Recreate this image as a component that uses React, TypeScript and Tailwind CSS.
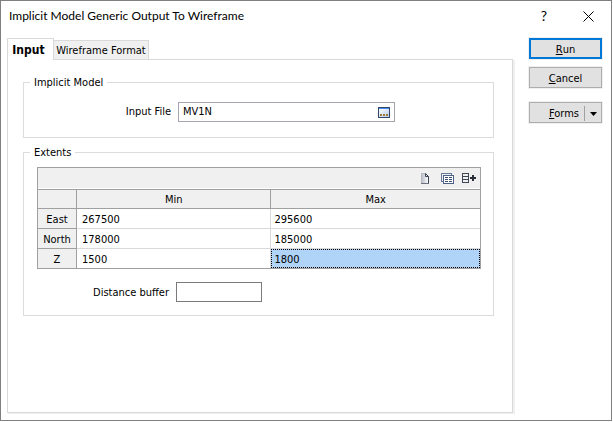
import React from 'react';

const rows = [
    { name: "East", min: "267500", max: "295600" },
    { name: "North", min: "178000", max: "185000" },
    { name: "Z", min: "1500", max: "1800" },
];

const buttonStyle = "h-[21px] w-full pt-0.5 bg-[#e1e1e1] outline-1 outline-[#f0f0f0] flex items-center justify-center";

const BrowseIcon = () => (
    <svg width="12" height="11" viewBox="0 0 12 11" shapeRendering="crispEdges">
        <defs>
            <linearGradient id="browse" x1="0" y1="0" x2="1" y2="1">
                <stop offset="0" stopColor="#ffffff" />
                <stop offset="1" stopColor="#b9cdec" />
            </linearGradient>
        </defs>
        <rect width="12" height="11" fill="#33476b" />
        <rect x="1" y="1" width="10" height="9" fill="url(#browse)" />
        <rect x="1" y="1" width="10" height="1" fill="#4a8af0" />
        <path d="M2 7h2v2H2zM5 7h2v2H5zM8 7h2v2H8z" fill="#a27a35" />
    </svg>
);

const NewIcon = () => (
    <svg width="8" height="11" viewBox="0 0 8 11">
        <defs>
            <linearGradient id="page" x1="0" y1="0" x2="1" y2="0">
                <stop offset="0" stopColor="#b9bdc5" />
                <stop offset="1" stopColor="#ffffff" />
            </linearGradient>
        </defs>
        <path d="M.5.5h4l3 3v7h-7z" fill="url(#page)" />
        <path d="M.5 10.5V.5h4" fill="none" stroke="#b4b8bf" />
        <path d="M4.5.5v3h3M4.5.5l3 3v7" fill="none" stroke="#3b4252" />
        <path d="M0 10.500h8" fill="none" stroke="#6b7180" />
    </svg>
);

const TablesIcon = () => (
    <svg width="13" height="11" viewBox="0 0 13 11" shapeRendering="crispEdges">
        <path d="M0 0h11v2h-1V1H1v7h1v1H0z" fill="#65789b" />
        <rect x="2" y="2" width="11" height="9" fill="#4c6088" />
        <rect x="3" y="3" width="9" height="7" fill="#ffffff" />
        <path d="M4 4h3v1H4zM8 4h3v1H8zM4 6h3v1H4zM8 6h3v1H8zM4 8h3v1H4zM8 8h3v1H8z" fill="#3d4f70" />
    </svg>
);

const AddRowIcon = () => (
    <svg width="14" height="10" viewBox="0 0 14 10" shapeRendering="crispEdges">
        <path d="M0 0h7v10H0zM1 1v2h5V1zM1 4v2h5V4zM1 7v2h5V7z" fill="#3f4658" fillRule="evenodd" />
        <path d="M10 2h2v2h2v2h-2v2h-2V6H8V4h2z" fill="#2b2f3a" />
    </svg>
);

const TitleBar = () => {
    return (
        <header className="h-[30px] pl-2 pr-[17px] flex items-center justify-between font-['Lato','Open_Sans',sans-serif] text-[12px]">
            <h1>Implicit Model Generic Output To Wireframe</h1>
            <div className="flex items-center gap-9">
                <button type="button" aria-label="Help" className="text-[14px] leading-4">?</button>
                <button type="button" aria-label="Close">
                    <svg width="11" height="11" viewBox="0 0 11 11">
                        <path d="M.5.5l10 10M10.5.5l-10 10" stroke="#000000" fill="none" />
                    </svg>
                </button>
            </div>
        </header>
    );
}

const ExtentsTable = () => {
    return (
        <div className="border border-[#a0a0a0]">
            <div className="h-[21px] pr-1 border-b border-white bg-[#f0f0f0] flex items-center justify-end gap-3">
                <button type="button" aria-label="New"><NewIcon /></button>
                <button type="button" aria-label="Copy table"><TablesIcon /></button>
                <button type="button" aria-label="Add row" className="-ml-1"><AddRowIcon /></button>
            </div>
            <table className="w-full table-fixed border-separate border-spacing-0 border-t border-[#a0a0a0]">
                <thead>
                    <tr className="h-[19px] bg-[#f0f0f0]">
                        <td className="w-[39px] p-0 border-r border-b border-[#a0a0a0]"></td>
                        <th scope="col" className="w-[44%] p-0 pt-px font-normal border-r border-b border-[#a0a0a0]">Min</th>
                        <th scope="col" className="p-0 pt-px font-normal border-b border-[#a0a0a0]">Max</th>
                    </tr>
                </thead>
                <tbody>
                    {rows.map((row) => (
                        <tr key={row.name} className="group h-5 last:h-[19px]">
                            <th scope="row" className="p-0 pt-0.5 font-normal bg-[#f0f0f0] border-r border-b border-[#a0a0a0] group-last:border-b-0">{row.name}</th>
                            <td className="p-0 pt-0.5 pl-[5px] border-r border-b border-[#d9d9d9] group-last:border-b-0">{row.min}</td>
                            <td className="p-0 pt-0.5 pl-[3px] border-b border-[#d9d9d9] group-last:border group-last:leading-[15px] group-last:pl-0.5 group-last:border-dotted group-last:border-black group-last:bg-[#b0d3f8]">{row.max}</td>
                        </tr>
                    ))}
                </tbody>
            </table>
        </div>
    );
}

const InputPanel = () => {
    return (
        <div role="tabpanel" className="flex-1 border border-[#d9d9d9] shadow-[1px_1px_0_#f0f0f0,2px_1px_0_#f0f0f0] pt-4 pl-[15px] pr-[18px]">
            <fieldset className="min-w-0 border border-[#dcdcdc] px-[13px] pb-[15px]">
                <legend className="-ml-[7px] px-1 leading-[13px]">Implicit Model</legend>
                <div className="pt-[13px] flex items-center gap-[7px]">
                    <label htmlFor="input-file" className="w-[134px] text-right">Input File</label>
                    <div className="w-[217px] h-5 pl-1 pr-1 border border-[#a5a5ad] flex items-center">
                        <input id="input-file" type="text" defaultValue="MV1N" className="min-w-0 flex-1 h-4 outline-none" />
                        <button type="button" aria-label="Browse"><BrowseIcon /></button>
                    </div>
                </div>
            </fieldset>
            <fieldset className="mt-2 min-w-0 border border-[#dcdcdc] pl-[13px] pr-3 pb-[13px]">
                <legend className="-ml-[7px] px-1 leading-[13px]">Extents</legend>
                <div className="pt-2">
                    <ExtentsTable />
                </div>
                <div className="mt-[13px] flex items-center gap-[7px]">
                    <label htmlFor="buffer" className="w-[132px] pt-0.5 text-right">Distance buffer</label>
                    <input id="buffer" type="text" className="w-[86px] h-5 px-1 border border-[#7a7a7a] outline-none" />
                </div>
            </fieldset>
        </div>
    );
}

const App = () => {
    return (
        <div className="min-h-screen flex flex-col pr-px pb-px bg-white text-black font-['DejaVu_Sans_Condensed','DejaVu_Sans',sans-serif] text-[11px] leading-4">
            <div className="flex-1 flex flex-col border border-[#7f7f7f]">
                <TitleBar />
                <main className="flex-1 flex gap-4 pt-[7px] pl-1.5 pr-[9px] pb-[7px]">
                    <section className="flex-1 flex flex-col">
                        <div role="tablist" className="flex items-end">
                            <button type="button" role="tab" aria-selected="true" className="relative -mb-px w-[47px] h-[22px] pr-1 bg-white border border-b-0 border-[#d9d9d9] text-[12px] font-bold">Input</button>
                            <button type="button" role="tab" aria-selected="false" className="w-[95px] h-[19px] pt-px bg-[#f0f0f0] border border-l-0 border-b-0 border-[#d9d9d9] whitespace-nowrap">Wireframe Format</button>
                        </div>
                        <InputPanel />
                    </section>
                    <aside className="w-[73px] flex flex-col">
                        <button type="button" className={`${buttonStyle} border-2 border-[#0078d7]`}><u>R</u>un</button>
                        <button type="button" className={`${buttonStyle} mt-2 border border-[#adadad]`}><u>C</u>ancel</button>
                        <button type="button" className={`${buttonStyle} mt-[14px] pl-[14px] border border-[#adadad]`}>
                            <span className="flex-1"><u>F</u>orms</span>
                            <span className="h-[15px] w-[17px] border-l border-[#a0a0a0] flex items-center justify-center">
                                <svg width="7" height="4" viewBox="0 0 7 4">
                                    <path d="M0 0h7L3.500 4z" fill="#000000" />
                                </svg>
                            </span>
                        </button>
                    </aside>
                </main>
            </div>
        </div>
    );
}


export default App;
